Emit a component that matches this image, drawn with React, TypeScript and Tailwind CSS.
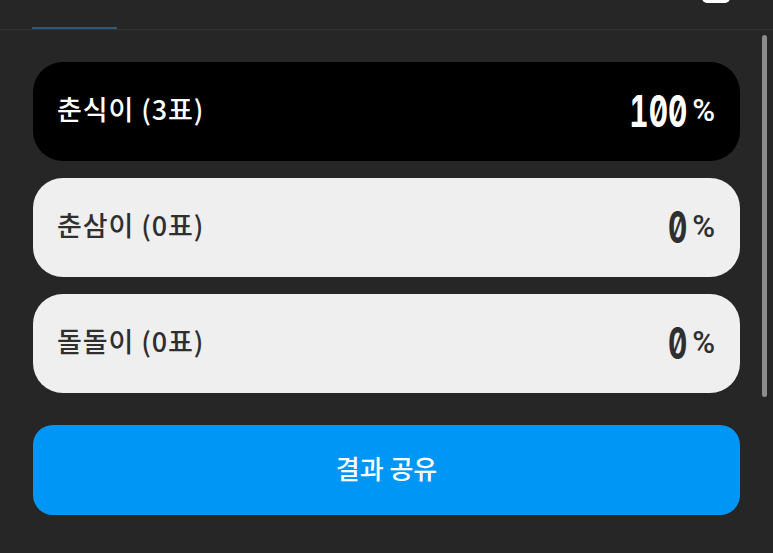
import React from 'react';

const results = [
  { name: '춘식이', votes: 3, percent: 100, leader: true },
  { name: '춘삼이', votes: 0, percent: 0, leader: false },
  { name: '돌돌이', votes: 0, percent: 0, leader: false },
];

const sans = '"Noto Sans CJK KR", "Noto Sans", Roboto, sans-serif';

export default function App() {
  return (
    <div className="relative h-[553px] w-full overflow-hidden bg-[#262626]" style={{ fontFamily: sans }}>
      {/* Top bar (cut off) */}
      <header className="relative h-[30px] border-b border-[#333333]">
        <div className="ml-[32px] h-full w-[85px] border-b-2 border-[#2d5a78]" />
        <div className="absolute right-[43px] top-[-20px] h-[23px] w-[28px] rounded-[5px] bg-white" />
      </header>

      {/* Scrollbar */}
      <div className="absolute right-[6px] top-[35px] h-[362px] w-[5px] rounded-full bg-[#8c8c8c]" />

      <main className="flex flex-col px-[33px] pt-[32px]">
        <div className="flex flex-col gap-[17px]">
          {results.map((r) => (
            <div
              key={r.name}
              className={`flex h-[99px] items-center justify-between rounded-[30px] pl-[24px] pr-[25px] ${
                r.leader ? 'bg-black text-white' : 'bg-[#efefef] text-[#2f2f2f]'
              }`}
            >
              <span className="-mt-[4px] text-[27px] font-medium tracking-[0.9px]">
                {r.name} ({r.votes}표)
              </span>
              <div className="-mt-[2px] flex items-center gap-[5px]">
                <span
                  className="inline-block origin-right scale-x-[0.68] text-[44px] font-bold leading-none slashed-zero tabular-nums"
                  style={{ fontFamily: 'Inter, sans-serif', marginLeft: '-30px' }}
                >
                  {r.percent}
                </span>
                <span className="text-[31px] font-medium leading-none" style={{ fontFamily: 'Roboto, sans-serif' }}>
                  %
                </span>
              </div>
            </div>
          ))}
        </div>

        <button className="mt-[32px] flex h-[90px] w-full items-center justify-center rounded-[20px] bg-[#0096f5] pb-[5px] text-[26px] font-medium text-white">
          결과 공유
        </button>
      </main>
    </div>
  );
}
